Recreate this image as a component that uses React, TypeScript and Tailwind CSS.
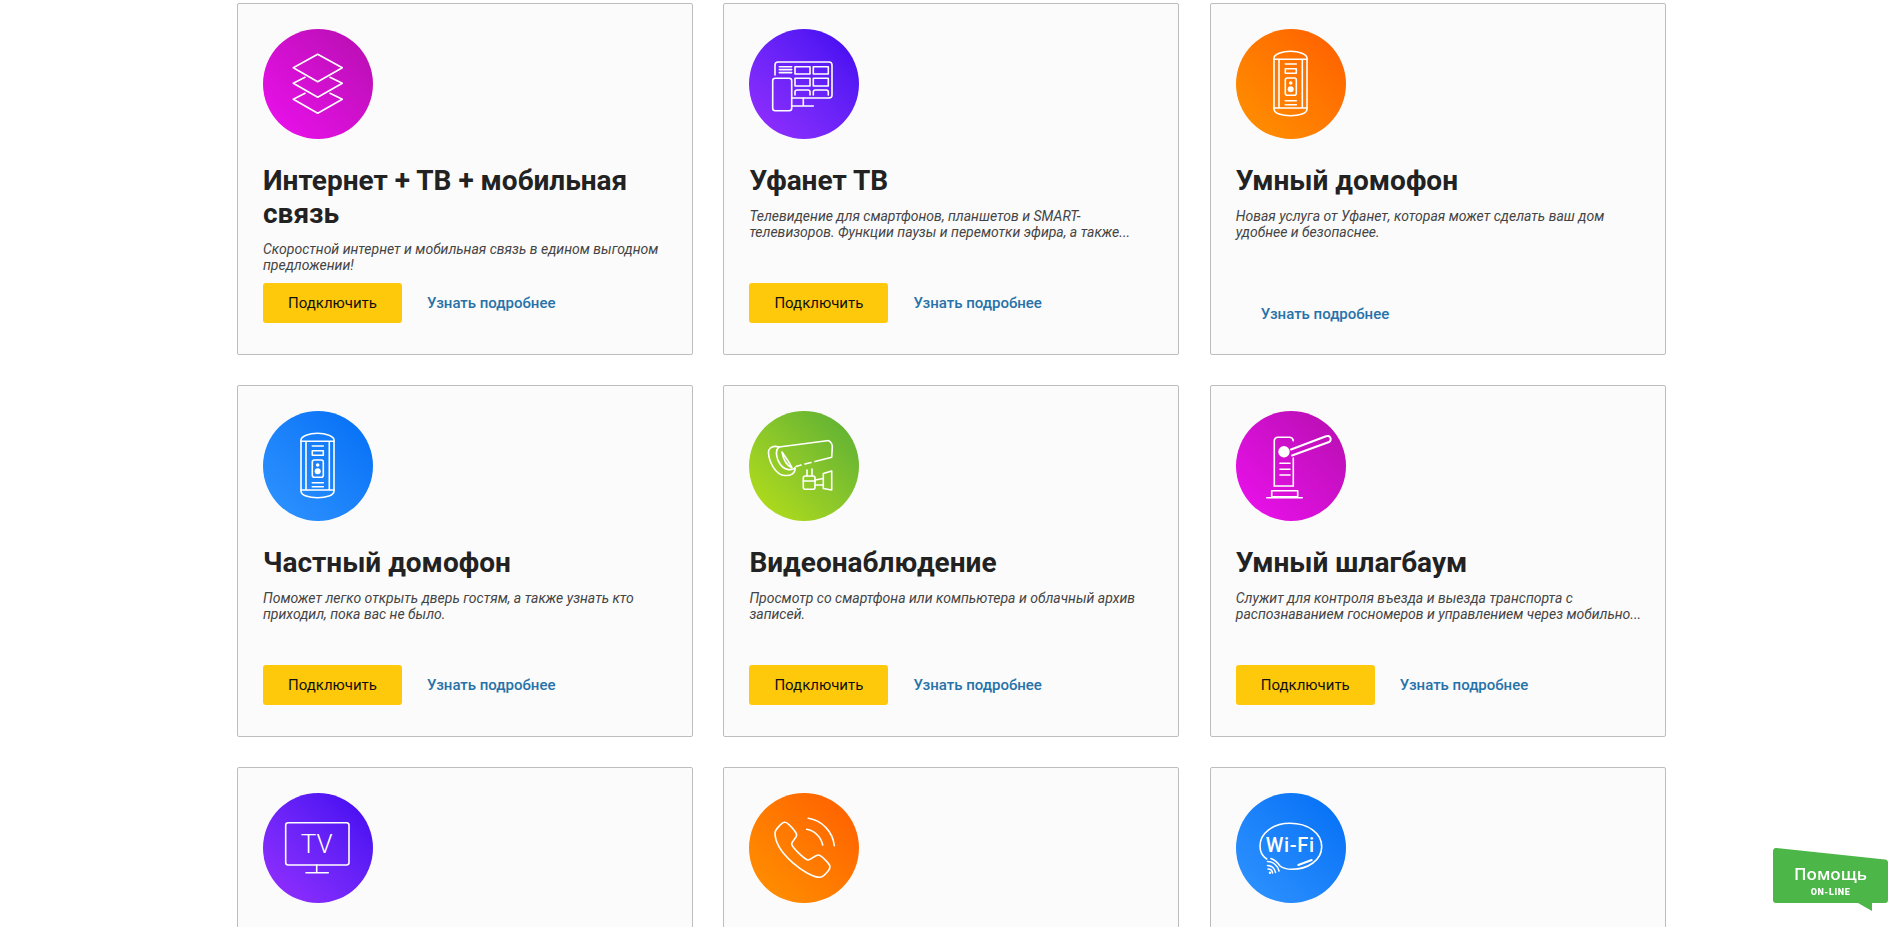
import type { ReactNode } from 'react';

interface Service {
  title?: string;
  text?: string;
  circle: string;
  icon: ReactNode;
  noButton?: boolean;
}

function Layers() {
  return (
    <g>
      <path d="M54.7 25.3 79.3 38.7 54.7 52.7 30.3 38.7Z" />
      <path d="M42 48.3 30.3 54.3 54.7 68.3 79.3 54.3 67 48.3" />
      <path d="M42 64.3 30.3 70.3 54.7 84.3 79.3 70.3 67 64.3" />
    </g>
  );
}

function Screens() {
  return (
    <g>
      <path d="M26 46V36a3 3 0 0 1 3-3h51a3 3 0 0 1 3 3v30a3 3 0 0 1-3 3H43" />
      <rect x="23.7" y="49.3" width="19" height="32.4" rx="2.5" />
      <path d="M30.3 37.7h12.4M30.3 40.6h12.4M30.3 43.6h12.4" />
      <rect x="46" y="37.7" width="15" height="7.3" />
      <rect x="64.3" y="37.7" width="15" height="7.3" />
      <rect x="46" y="49.3" width="15" height="7.7" />
      <rect x="64.3" y="49.3" width="15" height="7.7" />
      <path d="M46 66v-3a2 2 0 0 1 2-2h11a2 2 0 0 1 2 2v3M64.3 66v-3a2 2 0 0 1 2-2h11a2 2 0 0 1 2 2v3" />
      <path d="M54.3 69.3V77M43 77h21.3" />
    </g>
  );
}

function Intercom() {
  return (
    <g>
      <path d="M38 29c0-4 8-6.7 16.5-6.7S71 25 71 29v51c0 4.5-8 6.7-16.5 6.7S38 84.5 38 80Z" />
      <path d="M38 30.3h33M38 79h33M43 30.3V79M66.3 30.3V79" />
      <path d="M49.3 35h11" />
      <rect x="49.3" y="39.7" width="11" height="4.5" />
      <rect x="49.3" y="49" width="11" height="17.3" rx="2" />
      <circle cx="54.7" cy="54" r="1" fill="#fff" />
      <circle cx="54.7" cy="60.3" r="3" fill="#fff" stroke="none" />
      <path d="M49.3 71.7h11M49.3 75.7h11" />
    </g>
  );
}

function Camera() {
  return (
    <g>
      <path d="M30 36 78 29.7c3-.4 5.5 3 5.3 6l-.6 10.6L66 50.5M62 51.5 56 53M52 54l-5 1.5" />
      <path d="M30 36C24 34 19 37 19.5 42 20 50 26 64 36 64.5 42 65 46.5 62 46 57" />
      <path d="M30 36C26 39 27 47 31 53 35 59 42 60 46 57" />
      <path d="M33 41C34 47 37 54 43 57 41 52 37 47 33 41Z" />
      <path d="M58 59v6M63 58v7" />
      <rect x="54.3" y="65" width="11.7" height="13.3" rx="2" />
      <path d="M54.3 70H66M66 69l8.3-1.5M66 74h8.3" />
      <path d="M74.3 62.5 82.7 60v19l-8.4-1.500Z" />
    </g>
  );
}

function Barrier() {
  return (
    <g>
      <path d="M38.3 75V30a3.5 3.5 0 0 1 3.5-3.7h12a4 4 0 0 1 3.5 3.5M57.3 47v28" />
      <circle cx="48" cy="40.7" r="5.7" fill="#fff" stroke="none" />
      <path d="M55 38.5 90 25.3a3.2 3.2 0 0 1 3 5.7L56 44.5" strokeWidth="2" />
      <path d="M44 52.3h10M44 58.3h10M44 64h10" />
      <path d="M38.3 75h19" />
      <rect x="35.7" y="79.7" width="26" height="6" />
      <path d="M30.7 86.7h35.6" />
    </g>
  );
}

function Tv() {
  return (
    <g>
      <rect x="22.7" y="29.7" width="63.3" height="42.3" rx="2.5" />
      <path d="M53.7 72v7.7M43 79.7h22.3" />
      <text x="53.7" y="60" textAnchor="middle" fontSize="26" fill="#fff" stroke="none" fontWeight="300" fontFamily="Roboto, sans-serif">TV</text>
    </g>
  );
}

function Call() {
  return (
    <g>
      <path d="M26 40C26 37 33 29 36 29.3 39 29.5 47.5 39 47.7 42 47.8 45 42.7 48 42.7 51 42.7 54 56 67 59.3 67 62 67 66 62 69.3 62 72 62 81 71 81 73.7 81 77 74 84.3 71 84.3 58 84.3 26 60 26 40Z" />
      <path d="M59.3 25.3A31 31 0 0 1 85.3 52.7" />
      <path d="M57.7 36.3A20 20 0 0 1 73.7 52" />
    </g>
  );
}

function WiFi() {
  return (
    <g>
      <path d="M30.7 66C26 63 24 58 24 53 24 40 37 30.3 54 30.3 72 30.3 85.7 40 85.7 53.7 85.7 67 72 76.3 56 76.3 50 76.3 47 75.5 44 73 42 70 39 67 35 65.5" />
      <path d="M62.3 72 75.7 67" strokeWidth="2" />
      <text x="54.3" y="58.7" textAnchor="middle" fontSize="20" letterSpacing="0.7" fill="#fff" stroke="none" fontWeight="500" fontFamily="Roboto, sans-serif">Wi-Fi</text>
      <path d="M31.5 68.5A12 12 0 0 1 43 78M31.5 72.5A8 8 0 0 1 39.5 79.5M32 76A4.5 4.5 0 0 1 36.5 80" />
      <circle cx="34" cy="79.7" r="1.2" fill="#fff" stroke="none" />
    </g>
  );
}

const services: Service[] = [
  {
    title: 'Интернет + ТВ + мобильная связь',
    text: 'Скоростной интернет и мобильная связь в едином выгодном предложении!',
    circle: 'bg-linear-to-tr from-[#ee10f0] to-[#b50fae]',
    icon: <Layers />,
  },
  {
    title: 'Уфанет ТВ',
    text: 'Телевидение для смартфонов, планшетов и SMART-телевизоров. Функции паузы и перемотки эфира, а также...',
    circle: 'bg-linear-to-tr from-[#962eff] to-[#4000f0]',
    icon: <Screens />,
  },
  {
    title: 'Умный домофон',
    text: 'Новая услуга от Уфанет, которая может сделать ваш дом удобнее и безопаснее.',
    circle: 'bg-linear-to-tr from-[#ff9200] to-[#ff5c00]',
    icon: <Intercom />,
    noButton: true,
  },
  {
    title: 'Частный домофон',
    text: 'Поможет легко открыть дверь гостям, а также узнать кто приходил, пока вас не было.',
    circle: 'bg-linear-to-tr from-[#2f94ff] to-[#006ef5]',
    icon: <Intercom />,
  },
  {
    title: 'Видеонаблюдение',
    text: 'Просмотр со смартфона или компьютера и облачный архив записей.',
    circle: 'bg-linear-to-tr from-[#b9e010] to-[#55ad34]',
    icon: <Camera />,
  },
  {
    title: 'Умный шлагбаум',
    text: 'Служит для контроля въезда и выезда транспорта с распознаванием госномеров и управлением через мобильно...',
    circle: 'bg-linear-to-tr from-[#ee10f0] to-[#b50fae]',
    icon: <Barrier />,
  },
  { circle: 'bg-linear-to-tr from-[#962eff] to-[#4000f0]', icon: <Tv /> },
  { circle: 'bg-linear-to-tr from-[#ff9200] to-[#ff5c00]', icon: <Call /> },
  { circle: 'bg-linear-to-tr from-[#2f94ff] to-[#006ef5]', icon: <WiFi /> },
];

function Card({ item }: { item: Service }) {
  return (
    <div className="h-[352px] flex flex-col rounded-[2px] border border-[#bdbdbd] bg-[#fbfbfb] pl-[25px] pr-[15px] pt-[25px] pb-[20px]">
      <div className={`w-[110px] h-[110px] shrink-0 rounded-full ${item.circle}`}>
        <svg width="110" height="110" viewBox="0 0 110 110" fill="none" stroke="#fff" strokeWidth="1.6" strokeLinejoin="round" strokeLinecap="round">
          {item.icon}
        </svg>
      </div>
      {item.title && (
        <>
          <h3 className="mt-[25px] text-[28px] leading-[33px] font-bold text-[#222222]">{item.title}</h3>
          <p className="mt-[11px] text-[14px] leading-[16px] italic font-normal text-[#444444]">{item.text}</p>
          <div className={`mt-auto flex items-center h-10 ${item.noButton ? 'mb-0' : 'mb-[11px]'}`}>
            {!item.noButton && (
              <button type="button" className="w-[139px] h-10 rounded-[3px] bg-[#ffc90b] text-[15px] text-[#111111]">
                Подключить
              </button>
            )}
            <a href="#" className="ml-[25px] text-[15px] font-medium text-[#2672a9]">Узнать подробнее</a>
          </div>
        </>
      )}
    </div>
  );
}

function HelpBadge() {
  return (
    <div className="fixed right-[15px] bottom-[16px] w-[115px] h-[63px]">
      <svg width="115" height="63" viewBox="0 0 115 63" className="absolute inset-0">
        <path d="M0 3a3 3 0 0 1 3.4-3L112 11.5a3.4 3.4 0 0 1 3 3.5v37a3 3 0 0 1-3 3H99v8L85 55H3a3 3 0 0 1-3-3Z" fill="#4cb648" />
      </svg>
      <div className="absolute left-0 top-[15px] w-[115px] text-center text-white">
        <div className="text-[17px] leading-[22px] font-semibold font-['Open_Sans',sans-serif]">Помощь</div>
        <div className="mt-[2px] text-[9px] leading-[10px] font-black tracking-[0.6px] font-['Roboto',sans-serif]">ON-LINE</div>
      </div>
    </div>
  );
}

export default function App() {
  return (
    <div className="h-screen overflow-hidden bg-white pt-[3px] font-['Roboto',sans-serif]">
      <div className="ml-[237px] grid w-[1429px] grid-cols-[repeat(3,456px)] gap-x-[30.4px] gap-y-[30px]">
        {services.map((s, i) => (
          <Card key={i} item={s} />
        ))}
      </div>
      <HelpBadge />
    </div>
  );
}
